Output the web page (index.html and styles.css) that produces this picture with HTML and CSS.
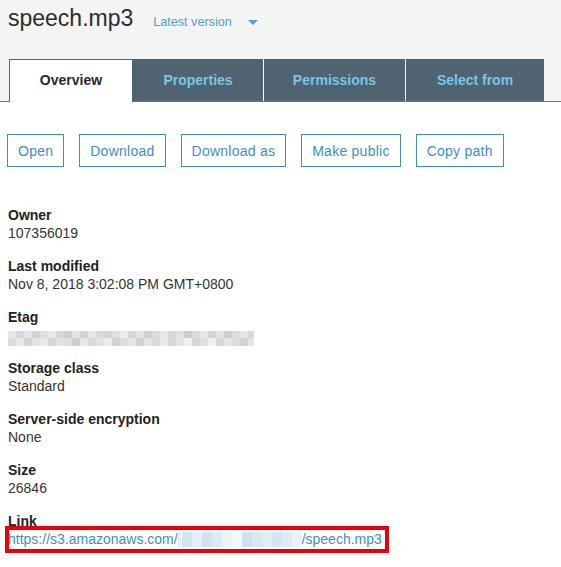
FILE: index.html
```html
<!DOCTYPE html>
<html>
<head>
<meta charset="utf-8">
<link rel="stylesheet" href="styles.css">
</head>
<body>
<div class="header">
  <div class="title-row">
    <h1 class="title">speech.mp3</h1>
    <span class="version">Latest version <span class="caret"></span></span>
  </div>
  <div class="tabs">
    <div class="tab tab-active">Overview</div>
    <div class="tab tab-props">Properties</div>
    <div class="tab tab-perms">Permissions</div>
    <div class="tab tab-select">Select from</div>
  </div>
</div>
<div class="actions">
  <button class="btn">Open</button>
  <button class="btn">Download</button>
  <button class="btn">Download as</button>
  <button class="btn">Make public</button>
  <button class="btn">Copy path</button>
</div>
<div class="fields">
  <div class="field"><div class="label">Owner</div><div class="value">107356019</div></div>
  <div class="field"><div class="label">Last modified</div><div class="value">Nov 8, 2018 3:02:08 PM GMT+0800</div></div>
  <div class="field"><div class="label">Etag</div><div class="value">
    <svg class="mosaic" width="246" height="15" viewBox="0 0 246 15">
      <g>
        <rect x="0" y="0" width="8" height="7" fill="#e6e6e6"/><rect x="8" y="0" width="8" height="7" fill="#d8d8d8"/><rect x="16" y="0" width="8" height="7" fill="#e2e2e2"/><rect x="24" y="0" width="8" height="7" fill="#d2d2d2"/><rect x="32" y="0" width="8" height="7" fill="#dedede"/><rect x="40" y="0" width="8" height="7" fill="#e8e8e8"/><rect x="48" y="0" width="8" height="7" fill="#d6d6d6"/><rect x="56" y="0" width="8" height="7" fill="#cfcfcf"/><rect x="64" y="0" width="8" height="7" fill="#e4e4e4"/><rect x="72" y="0" width="8" height="7" fill="#d3d3d3"/><rect x="80" y="0" width="8" height="7" fill="#e6e6e6"/><rect x="88" y="0" width="8" height="7" fill="#dadada"/><rect x="96" y="0" width="8" height="7" fill="#d4d4d4"/><rect x="104" y="0" width="8" height="7" fill="#e0e0e0"/><rect x="112" y="0" width="8" height="7" fill="#ececec"/><rect x="120" y="0" width="8" height="7" fill="#d6d6d6"/><rect x="128" y="0" width="8" height="7" fill="#e2e2e2"/><rect x="136" y="0" width="8" height="7" fill="#d0d0d0"/><rect x="144" y="0" width="8" height="7" fill="#dddddd"/><rect x="152" y="0" width="8" height="7" fill="#e6e6e6"/><rect x="160" y="0" width="8" height="7" fill="#d5d5d5"/><rect x="168" y="0" width="8" height="7" fill="#e1e1e1"/><rect x="176" y="0" width="8" height="7" fill="#cdcdcd"/><rect x="184" y="0" width="8" height="7" fill="#dcdcdc"/><rect x="192" y="0" width="8" height="7" fill="#e7e7e7"/><rect x="200" y="0" width="8" height="7" fill="#d4d4d4"/><rect x="208" y="0" width="8" height="7" fill="#e2e2e2"/><rect x="216" y="0" width="8" height="7" fill="#cfcfcf"/><rect x="224" y="0" width="8" height="7" fill="#dbdbdb"/><rect x="232" y="0" width="8" height="7" fill="#e5e5e5"/><rect x="240" y="0" width="6" height="7" fill="#d9d9d9"/>
        <rect x="0" y="7" width="8" height="8" fill="#dcdcdc"/><rect x="8" y="7" width="8" height="8" fill="#e8e8e8"/><rect x="16" y="7" width="8" height="8" fill="#d4d4d4"/><rect x="24" y="7" width="8" height="8" fill="#e4e4e4"/><rect x="32" y="7" width="8" height="8" fill="#e9e9e9"/><rect x="40" y="7" width="8" height="8" fill="#d6d6d6"/><rect x="48" y="7" width="8" height="8" fill="#e3e3e3"/><rect x="56" y="7" width="8" height="8" fill="#dddddd"/><rect x="64" y="7" width="8" height="8" fill="#cfcfcf"/><rect x="72" y="7" width="8" height="8" fill="#e7e7e7"/><rect x="80" y="7" width="8" height="8" fill="#d9d9d9"/><rect x="88" y="7" width="8" height="8" fill="#e2e2e2"/><rect x="96" y="7" width="8" height="8" fill="#ececec"/><rect x="104" y="7" width="8" height="8" fill="#d3d3d3"/><rect x="112" y="7" width="8" height="8" fill="#dedede"/><rect x="120" y="7" width="8" height="8" fill="#e6e6e6"/><rect x="128" y="7" width="8" height="8" fill="#d1d1d1"/><rect x="136" y="7" width="8" height="8" fill="#e4e4e4"/><rect x="144" y="7" width="8" height="8" fill="#dadada"/><rect x="152" y="7" width="8" height="8" fill="#e9e9e9"/><rect x="160" y="7" width="8" height="8" fill="#d7d7d7"/><rect x="168" y="7" width="8" height="8" fill="#e3e3e3"/><rect x="176" y="7" width="8" height="8" fill="#efefef"/><rect x="184" y="7" width="8" height="8" fill="#d5d5d5"/><rect x="192" y="7" width="8" height="8" fill="#e0e0e0"/><rect x="200" y="7" width="8" height="8" fill="#f0f0f0"/><rect x="208" y="7" width="8" height="8" fill="#d8d8d8"/><rect x="216" y="7" width="8" height="8" fill="#e6e6e6"/><rect x="224" y="7" width="8" height="8" fill="#dcdcdc"/><rect x="232" y="7" width="8" height="8" fill="#d2d2d2"/><rect x="240" y="7" width="6" height="8" fill="#e4e4e4"/>
      </g>
    </svg>
  </div></div>
  <div class="field"><div class="label">Storage class</div><div class="value">Standard</div></div>
  <div class="field"><div class="label">Server-side encryption</div><div class="value">None</div></div>
  <div class="field"><div class="label">Size</div><div class="value">26846</div></div>
  <div class="field"><div class="label">Link</div><div class="value link-value"><a class="link" href="#">https://s3.amazonaws.com/<svg class="blur" width="124" height="15" viewBox="0 0 124 15"><rect x="0" y="0" width="3" height="15" fill="#e3eef4"/><rect x="4" y="0" width="10" height="15" fill="#d2e5ef"/><rect x="14" y="0" width="10" height="15" fill="#e4eff5"/><rect x="24" y="0" width="10" height="15" fill="#cfe2ed"/><rect x="34" y="0" width="10" height="15" fill="#dcebf3"/><rect x="44" y="0" width="10" height="15" fill="#eaf3f7"/><rect x="54" y="0" width="10" height="15" fill="#f1f7fa"/><rect x="64" y="0" width="10" height="15" fill="#cde1ec"/><rect x="74" y="0" width="10" height="15" fill="#d6e7f0"/><rect x="84" y="0" width="10" height="15" fill="#e1edf4"/><rect x="94" y="0" width="10" height="15" fill="#d4e6ef"/><rect x="104" y="0" width="10" height="15" fill="#dfecf3"/><rect x="114" y="0" width="10" height="15" fill="#e8f2f6"/></svg>/speech.mp3</a><span class="highlight"></span></div></div>
</div>
</body>
</html>
```
FILE: styles.css
```css
html, body {
  margin: 0;
  padding: 0;
  background: #ffffff;
}
body {
  font-family: "Liberation Sans", Arial, Helvetica, sans-serif;
  font-size: 14px;
  color: #333333;
}
.header {
  background: #f3f4f4;
}
.title-row {
  display: flex;
  align-items: baseline;
  padding: 4px 0 0 8px;
  height: 28px;
}
.title {
  margin: 0;
  font-size: 23px;
  line-height: 28px;
  font-weight: normal;
  color: #2d2d2d;
}
.version {
  margin-left: 20px;
  font-size: 12.6px;
  color: #4da2cd;
  display: inline-flex;
  align-items: center;
}
.caret {
  display: inline-block;
  width: 0;
  height: 0;
  margin-left: 16px;
  margin-top: 1px;
  border-left: 5px solid transparent;
  border-right: 5px solid transparent;
  border-top: 5px solid #4da2cd;
}
.tabs {
  display: flex;
  margin-top: 27px;
  padding-left: 9px;
  border-bottom: 1px solid #697984;
  height: 42px;
}
.tab {
  box-sizing: border-box;
  height: 42px;
  display: flex;
  align-items: center;
  justify-content: center;
  font-weight: bold;
  font-size: 14px;
  background: #4f6370;
  color: #7ac6e4;
  border-right: 1px solid #ffffff;
}
.tab-active {
  width: 124px;
  height: 43px;
  margin-bottom: -1px;
  background: #ffffff;
  color: #2a2a2a;
  border: 1px solid #56666f;
  border-bottom: none;
  padding-bottom: 2px;
}
.tab-props { width: 131px; }
.tab-perms { width: 142px; }
.tab-select { width: 138px; border-right: none; }
.actions {
  display: flex;
  gap: 15px;
  padding: 32px 0 0 7px;
}
.btn {
  box-sizing: border-box;
  height: 33px;
  padding: 0 10px;
  background: #ffffff;
  border: 1px solid #3f8fba;
  color: #3f8fbf;
  font-family: inherit;
  font-size: 14px;
  letter-spacing: 0.25px;
  border-radius: 0;
  cursor: pointer;
}
.fields {
  padding: 39px 0 0 8px;
}
.field {
  margin-bottom: 15px;
}
.label {
  font-weight: bold;
  line-height: 18px;
  color: #222222;
}
.value {
  line-height: 18px;
  color: #333333;
}
.mosaic {
  display: block;
  margin-top: 5px;
  margin-bottom: -2px;
}
.link-value {
  position: relative;
}
.link {
  color: #3e8fc2;
  text-decoration: none;
}
.blur {
  vertical-align: -3px;
}
.highlight {
  position: absolute;
  left: -3px;
  top: -4px;
  width: 384px;
  height: 27px;
  box-sizing: border-box;
  border: 4px solid #e8000b;
  pointer-events: none;
}
```
